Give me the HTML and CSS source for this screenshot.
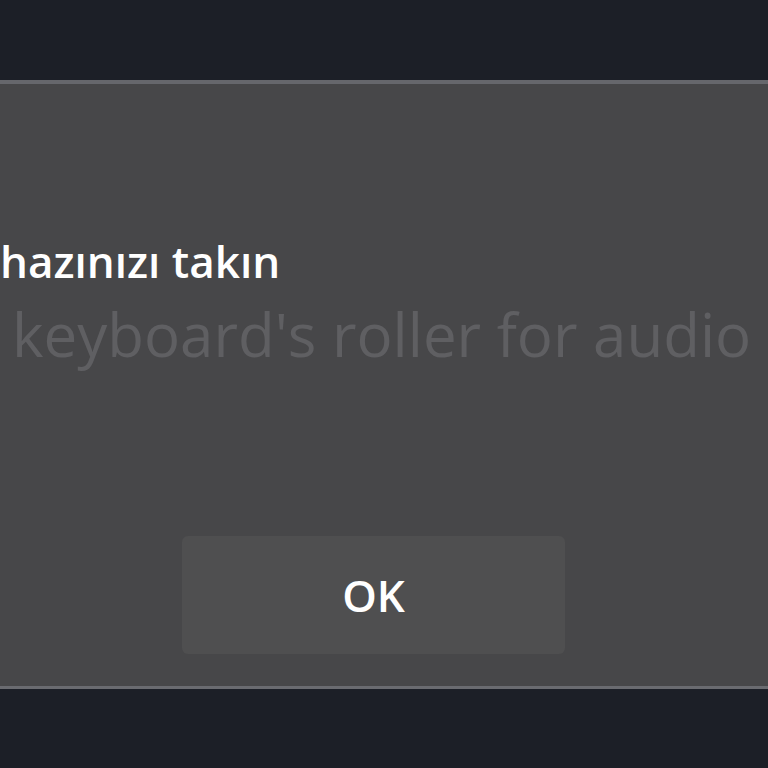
FILE: index.html
```html
<!DOCTYPE html>
<html lang="tr">
<head>
<meta charset="utf-8">
<link rel="stylesheet" href="styles.css">
</head>
<body>
<div class="screen">
  <div class="band"></div>
  <div class="dialog">
    <div class="content">
      <div class="title">hazınızı takın</div>
      <div class="subtitle">keyboard's roller for audio</div>
    </div>
    <div class="actions">
      <button class="ok">OK</button>
    </div>
  </div>
  <div class="band band-bottom"></div>
</div>
</body>
</html>
```
FILE: styles.css
```css
html, body {
  margin: 0;
  padding: 0;
  width: 768px;
  height: 768px;
  overflow: hidden;
  background: #1b1f27;
}
.screen {
  display: flex;
  flex-direction: column;
  height: 768px;
}
.band {
  height: 80px;
  background: #1c1f27;
  flex: none;
}
.band-bottom {
  flex: 1;
  height: auto;
}
.dialog {
  height: 602px;
  background: #474749;
  border-top: 4px solid #66676c;
  border-bottom: 3px solid #6a6b70;
  display: flex;
  flex-direction: column;
  flex: none;
}
.content {
  padding-top: 150px;
  white-space: nowrap;
}
.title {
  font-family: "Open Sans", sans-serif;
  font-size: 44px;
  font-weight: 600;
  line-height: 54px;
  color: #ffffff;
}
.subtitle {
  font-family: "Open Sans", sans-serif;
  font-size: 60px;
  line-height: 80px;
  color: #5f5f62;
  margin-left: 12px;
  margin-top: 6px;
}
.actions {
  margin-top: auto;
  padding: 0 0 32px 182px;
}
.ok {
  width: 383px;
  height: 118px;
  background: #4f4f50;
  border: none;
  border-radius: 6px;
  font-family: "Open Sans", sans-serif;
  font-size: 44px;
  font-weight: 600;
  color: #ffffff;
  padding: 0;
}
```
